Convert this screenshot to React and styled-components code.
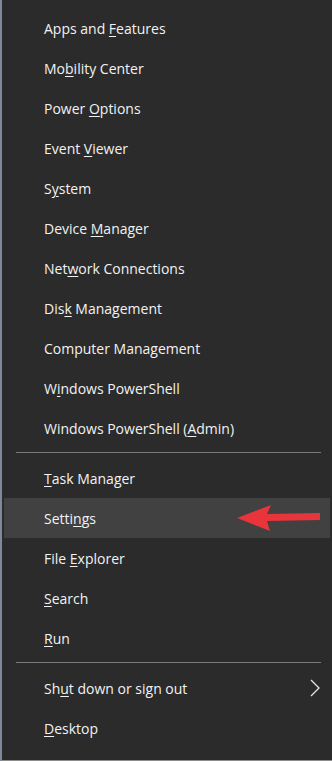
import React from 'react';
import styled, { createGlobalStyle } from 'styled-components';

const GlobalStyle = createGlobalStyle`
  html, body {
    margin: 0;
    padding: 0;
    background: #2b2b2b;
  }
`;

const groups = [
  [
    ['Apps and ', 'F', 'eatures'],
    ['Mo', 'b', 'ility Center'],
    ['Power ', 'O', 'ptions'],
    ['Event ', 'V', 'iewer'],
    ['S', 'y', 'stem'],
    ['Device ', 'M', 'anager'],
    ['Net', 'w', 'ork Connections'],
    ['Dis', 'k', ' Management'],
    ['Computer Mana', 'g', 'ement'],
    ['W', 'i', 'ndows PowerShell'],
    ['Windows PowerShell (', 'A', 'dmin)'],
  ],
  [
    ['', 'T', 'ask Manager'],
    ['Setti', 'n', 'gs', 'active'],
    ['File ', 'E', 'xplorer'],
    ['', 'S', 'earch'],
    ['', 'R', 'un'],
  ],
  [
    ['Sh', 'u', 't down or sign out', 'sub'],
    ['', 'D', 'esktop'],
  ],
];

const Menu = styled.div`
  width: 332px;
  height: 761px;
  box-sizing: border-box;
  background: #2b2b2b;
  border-left: 2px solid #7d8a9c;
  border-bottom: 1px solid #8c8c8c;
  padding: 8px 2px 0 2px;
  font-family: 'Open Sans', 'Noto Sans', sans-serif;
  font-size: 14px;
  color: #f2f2f2;
`;

const Separator = styled.div`
  height: 1px;
  background: #7a7a7a;
  margin: 4px 9px 5px 12px;
`;

const Row = styled.div`
  position: relative;
  height: 40px;
  display: flex;
  align-items: center;
  padding-left: 40px;
  background: ${(p) => (p.$active ? '#414141' : 'transparent')};
`;

const Key = styled.span`
  text-decoration: underline;
  text-underline-offset: 2px;
`;

const Chevron = styled.svg`
  position: absolute;
  right: 10px;
  top: 11px;
`;

const Arrow = styled.svg`
  position: absolute;
  left: 229px;
  top: 6px;
`;

const App = () => (
  <>
    <GlobalStyle />
    <Menu>
      {groups.map((items, g) => (
        <React.Fragment key={g}>
          {g > 0 && <Separator />}
          {items.map(([pre, key, post, flag]) => (
            <Row key={pre + key + post} $active={flag === 'active'}>
              <span>
                {pre}
                <Key>{key}</Key>
                {post}
              </span>
              {flag === 'sub' && (
                <Chevron width="10" height="18" viewBox="0 0 10 18">
                  <path d="M1 1 L9 9 L1 17" fill="none" stroke="#e6e6e6" strokeWidth="1.3" />
                </Chevron>
              )}
              {flag === 'active' && (
                <Arrow width="88" height="30" viewBox="0 0 88 30">
                  <path
                    d="M4 14 L38 1 L34 10 L87 9 L87 16 L34 17 L37 27 Z"
                    fill="#e8353b"
                  />
                </Arrow>
              )}
            </Row>
          ))}
        </React.Fragment>
      ))}
    </Menu>
  </>
);

export default App;
